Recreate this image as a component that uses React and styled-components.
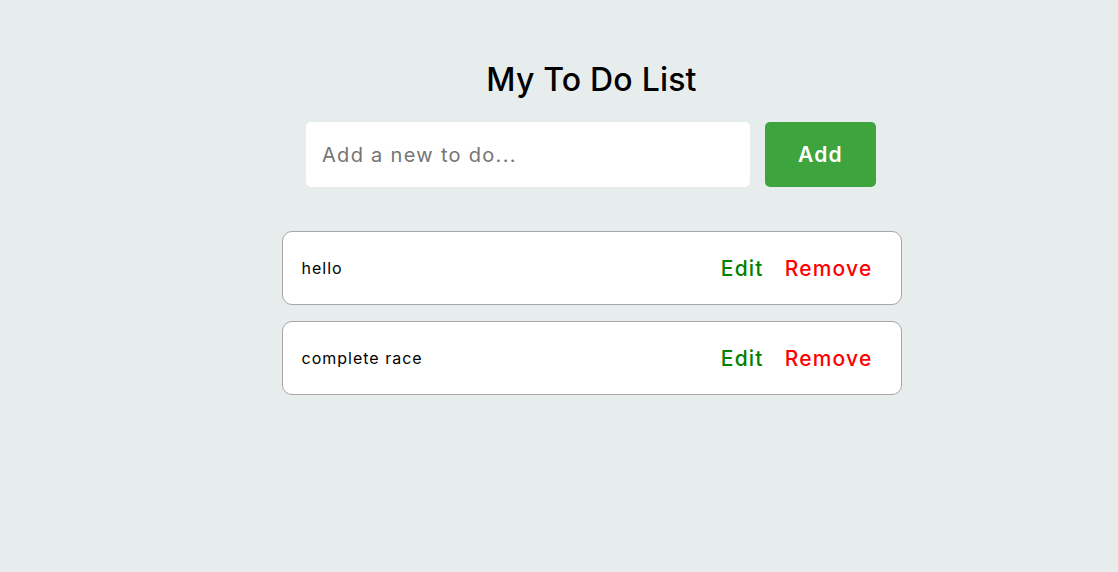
import React from "react";
import styled, { createGlobalStyle } from "styled-components";

const Global = createGlobalStyle`
  html, body { margin: 0; padding: 0; background: #e7eded; }
  body { font-family: "Inter", "Noto Sans", sans-serif; color: #000; }
`;

const Page = styled.div`
  min-height: 572px;
  display: flex;
  flex-direction: column;
  align-items: center;
  padding-left: 65px;
  box-sizing: border-box;
`;

const Title = styled.h1`
  margin: 60px 0 0;
  font-size: 32px;
  font-weight: 500;
  line-height: 40px;
  letter-spacing: 0.2px;
`;

const Form = styled.form`
  display: flex;
  gap: 15px;
  margin-top: 22px;
  margin-right: 1px;
`;

const Input = styled.input`
  width: 444px;
  height: 65px;
  box-sizing: border-box;
  border: none;
  border-radius: 5px;
  background: #fff;
  padding: 0 16px;
  font-family: inherit;
  font-size: 20px;
  letter-spacing: 1.3px;
  outline: none;
  &::placeholder { color: #757575; }
`;

const AddButton = styled.button`
  width: 111px;
  height: 65px;
  border: none;
  border-radius: 5px;
  background: #3ea43e;
  color: #fff;
  font-family: inherit;
  font-size: 21px;
  font-weight: 600;
  letter-spacing: 1.3px;
  cursor: pointer;
`;

const List = styled.ul`
  list-style: none;
  margin: 44px 0 0;
  padding: 0;
  display: flex;
  flex-direction: column;
  gap: 16px;
`;

const Item = styled.li`
  width: 620px;
  height: 74px;
  box-sizing: border-box;
  border: 1px solid #a6a6a6;
  border-radius: 10px;
  background: #fff;
  display: flex;
  align-items: center;
  padding: 0 28px 0 19px;
`;

const Text = styled.span`
  flex: 1;
  font-size: 16px;
  letter-spacing: 1px;
`;

const Action = styled.button`
  border: none;
  background: none;
  padding: 0;
  margin-left: ${(p) => p.$gap || 0}px;
  font-family: inherit;
  font-size: 21px;
  font-weight: 500;
  letter-spacing: 1.2px;
  color: ${(p) => p.$color};
  cursor: pointer;
`;

const todos = ["hello", "complete race"];

export default function App() {
  return (
    <>
      <Global />
      <Page>
        <Title>My To Do List</Title>
        <Form onSubmit={(e) => e.preventDefault()}>
          <Input placeholder="Add a new to do..." />
          <AddButton type="submit">Add</AddButton>
        </Form>
        <List>
          {todos.map((t) => (
            <Item key={t}>
              <Text>{t}</Text>
              <Action $color="#008000">Edit</Action>
              <Action $color="#ff0000" $gap={21}>Remove</Action>
            </Item>
          ))}
        </List>
      </Page>
    </>
  );
}
